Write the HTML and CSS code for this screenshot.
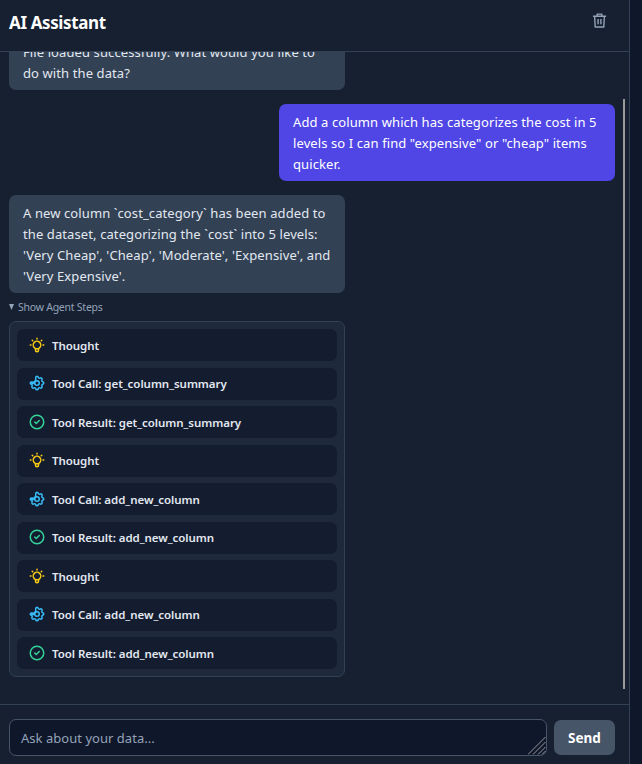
FILE: index.html
```html
<!DOCTYPE html>
<html lang="en">
<head>
<meta charset="utf-8">
<title>AI Assistant</title>
<link rel="stylesheet" href="styles.css">
</head>
<body>
<svg class="defs" aria-hidden="true">
  <symbol id="bulb" viewBox="0 0 24 24"><path d="M9.663 17h4.673M12 3v1m6.364 1.636-.707.707M21 12h-1M4 12H3m3.343-5.657-.707-.707m2.828 9.900a5 5 0 1 1 7.072 0l-.548.547A3.374 3.374 0 0 0 14 18.469V19a2 2 0 1 1-4 0v-.531c0-.895-.356-1.754-.988-2.386l-.548-.547z"/></symbol>
  <symbol id="cog" viewBox="0 0 24 24"><path d="M10.325 4.317c.426-1.756 2.924-1.756 3.350 0a1.724 1.724 0 0 0 2.573 1.066c1.543-.94 3.310.826 2.370 2.370a1.724 1.724 0 0 0 1.065 2.572c1.756.426 1.756 2.924 0 3.350a1.724 1.724 0 0 0-1.066 2.573c.94 1.543-.826 3.310-2.370 2.370a1.724 1.724 0 0 0-2.572 1.065c-.426 1.756-2.924 1.756-3.350 0a1.724 1.724 0 0 0-2.573-1.066c-1.543.94-3.310-.826-2.370-2.370a1.724 1.724 0 0 0-1.065-2.572c-1.756-.426-1.756-2.600 0-3L7.800 11l2.500-2.800z"/><path d="M15 12a3 3 0 1 1-6 0 3 3 0 0 1 6 0zM5 12.800h3"/></symbol>
  <symbol id="check" viewBox="0 0 24 24"><path d="m9 12 2 2 4-4m6 2a9 9 0 1 1-18 0 9 9 0 0 1 18 0z"/></symbol>
</svg>
<main class="panel">
  <header class="head">
    <h1>AI Assistant</h1>
    <svg class="trash" viewBox="0 0 16 16"><path d="M1 3.500h14M5.500 3.500v-2.300h5v2.300M2.800 3.500l.6 11.500h9.200l.6-11.500M6.500 6.500v5.500M9.500 6.500v5.500"/></svg>
  </header>
  <section class="chat">
    <div class="bubble first">File loaded successfully. What would you like to<br>do with the data?</div>
    <div class="bubble user">Add a column which has categorizes the cost in 5<br>levels so I can find "expensive" or "cheap" items<br>quicker.</div>
    <div class="bubble">A new column `cost_category` has been added to<br>the dataset, categorizing the `cost` into 5 levels:<br>'Very Cheap', 'Cheap', 'Moderate', 'Expensive', and<br>'Very Expensive'.</div>
    <div class="toggle"><i></i><span>Show Agent Steps</span></div>
    <div class="steps">
      <div class="step thought"><svg><use href="#bulb"/></svg><span>Thought</span></div>
      <div class="step call"><svg><use href="#cog"/></svg><span>Tool Call: get_column_summary</span></div>
      <div class="step result"><svg><use href="#check"/></svg><span>Tool Result: get_column_summary</span></div>
      <div class="step thought"><svg><use href="#bulb"/></svg><span>Thought</span></div>
      <div class="step call"><svg><use href="#cog"/></svg><span>Tool Call: add_new_column</span></div>
      <div class="step result"><svg><use href="#check"/></svg><span>Tool Result: add_new_column</span></div>
      <div class="step thought"><svg><use href="#bulb"/></svg><span>Thought</span></div>
      <div class="step call"><svg><use href="#cog"/></svg><span>Tool Call: add_new_column</span></div>
      <div class="step result"><svg><use href="#check"/></svg><span>Tool Result: add_new_column</span></div>
    </div>
    <div class="thumb"></div>
  </section>
  <footer class="foot">
    <div class="field"><span>Ask about your data...</span><svg class="grip" viewBox="0 0 18 18"><path d="M0 17.500 17.500 0M5 17.500 17.500 5M10 17.500 17.500 10M14 17.500l3.500-3.500"/></svg></div>
    <button class="send">Send</button>
  </footer>
</main>
</body>
</html>
```

FILE: styles.css
```css
* { box-sizing: border-box; }
body { margin: 0; height: 764px; overflow: hidden; background: #0f172a; font-family: "Noto Sans", "Open Sans", sans-serif; }
.defs { display: none; }
.panel { width: 630px; height: 764px; display: flex; flex-direction: column; background: #162031; border-right: 1px solid #334155; }
.head { height: 52px; flex: none; display: flex; align-items: center; justify-content: space-between; padding: 0 22px 6px 9px; border-bottom: 1px solid #334155; }
h1 { margin: 0; font-size: 17px; line-height: 24px; font-weight: 700; color: #fff; letter-spacing: -0.38px; }
.trash { width: 15px; height: 15px; margin-top: -4px; fill: none; stroke: #94a3b8; stroke-width: 1.5; stroke-linejoin: round; }
.chat { position: relative; height: 652px; flex: none; overflow: hidden; padding: 0 14px 0 9px; display: flex; flex-direction: column; align-items: flex-start; }
.bubble { width: 336px; flex: none; padding: 8px 14px 6px; border-radius: 7px; background: #334155; color: #e2e8f0; font-size: 13px; line-height: 21px; letter-spacing: 0.1px; white-space: nowrap; margin-bottom: 14px; }
.first { margin-top: -18px; }
.user { align-self: flex-end; background: #4f46e5; color: #fff; }
.toggle { display: flex; align-items: center; gap: 4px; height: 14px; margin: -7px 0 7px; font-size: 10.500px; line-height: 14px; letter-spacing: -0.24px; color: #94a3b8; }
.toggle i { width: 5px; height: 6px; background: #94a3b8; clip-path: polygon(0 0, 100% 0, 50% 100%); }
.steps { width: 336px; height: 356px; flex: none; padding: 7px; border: 1px solid #334155; border-radius: 7px; background: #1e293b; display: flex; flex-direction: column; justify-content: space-between; }
.step { height: 32px; padding-left: 11px; display: flex; align-items: center; gap: 6px; border-radius: 7px; background: #141c2f; color: #e2e8f0; font-size: 11.500px; font-weight: 600; letter-spacing: -0.05px; white-space: nowrap; }
.step svg { width: 18px; height: 18px; margin-top: -1px; fill: none; stroke: currentColor; stroke-width: 2; stroke-linecap: round; stroke-linejoin: round; }
.thought svg { color: #facc15; }
.call svg { color: #38bdf8; }
.result svg { color: #34d399; }
.thumb { position: absolute; left: 623px; top: 47px; width: 2px; height: 590px; background: #9a9a9a; }
.foot { height: 60px; flex: none; border-top: 1px solid #334155; padding: 14px 14px 0 9px; display: flex; gap: 7px; }
.field { position: relative; width: 538px; height: 37px; border: 1px solid #475569; border-radius: 7px; background: #0f172a; color: #94a3b8; font-size: 13px; line-height: 37px; letter-spacing: 0.03px; padding-left: 11px; }
.grip { position: absolute; right: 0; bottom: 0; width: 18px; height: 18px; fill: none; stroke: #9a9a9a; stroke-width: 1; }
.send { width: 61px; height: 35px; margin-top: 1px; padding: 0; border: 0; border-radius: 7px; background: #475569; color: #fff; font: 700 13.500px "Noto Sans", sans-serif; }
```
